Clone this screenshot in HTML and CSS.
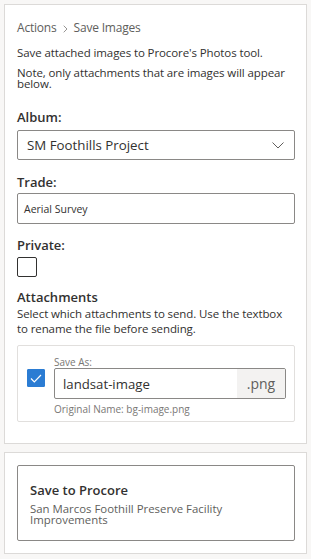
FILE: index.html
```html
<!DOCTYPE html>
<html>
<head>
<meta charset="utf-8">
<link rel="stylesheet" href="styles.css">
</head>
<body>
<div class="page">
  <section class="card main">
    <div class="crumbs">Actions<svg class="sep" width="5" height="8" viewBox="0 0 5 8"><path d="M0.7 0.7 L4 4 L0.7 7.3" fill="none" stroke="#8a8886" stroke-width="0.9"/></svg>Save Images</div>
    <p class="desc first">Save attached images to Procore's Photos tool.</p>
    <p class="desc tight">Note, only attachments that are images will appear below.</p>

    <div class="label album">Album:</div>
    <div class="select">
      <span>SM Foothills Project</span>
      <svg class="chev" width="12" height="7" viewBox="0 0 12 7"><path d="M0.5 0.5 L6 6 L11.5 0.5" fill="none" stroke="#605e5c" stroke-width="1"/></svg>
    </div>

    <div class="label trade">Trade:</div>
    <div class="textbox">Aerial Survey</div>

    <div class="label private">Private:</div>
    <div class="check"></div>

    <div class="label heading">Attachments</div>
    <p class="desc help">Select which attachments to send. Use the textbox to rename the file before sending.</p>

    <div class="attach">
      <div class="checked">
        <svg width="12" height="9" viewBox="0 0 12 9"><path d="M1 4.5 L4.3 7.8 L11 1" fill="none" stroke="#fff" stroke-width="1.2"/></svg>
      </div>
      <div class="attach-body">
        <div class="small">Save As:</div>
        <div class="group">
          <span class="name">landsat-image</span>
          <span class="ext">.png</span>
        </div>
        <div class="small orig">Original Name: bg-image.png</div>
      </div>
    </div>
  </section>

  <section class="card footer">
    <div class="button">
      <div class="btn-title">Save to Procore</div>
      <div class="btn-sub">San Marcos Foothill Preserve Facility Improvements</div>
    </div>
  </section>
</div>
</body>
</html>
```

FILE: styles.css
```css
html, body {
  margin: 0;
  padding: 0;
  background: #f8f7f6;
}
body {
  font-family: "Open Sans", "Noto Sans", "Liberation Sans", sans-serif;
  color: #323130;
}
.page {
  padding: 4px;
  display: flex;
  flex-direction: column;
  gap: 8px;
  width: 303px;
}
.card {
  box-sizing: border-box;
  background: #fff;
  border: 1px solid #dcdad8;
  padding: 13px 11px 0 12px;
}
.main {
  height: 440px;
}
.crumbs {
  display: flex;
  align-items: center;
  font-size: 12px;
  line-height: 20px;
  color: #605e5c;
  letter-spacing: -0.2px;
}
.sep {
  display: block;
  margin: 1px 6px 0 6px;
}
.desc {
  margin: 0;
  font-size: 11.5px;
  color: #323130;
  letter-spacing: -0.1px;
}
.desc.first {
  margin-top: 7px;
  line-height: 16px;
}
.desc.tight {
  margin-top: 6px;
  line-height: 11px;
}
.label {
  font-size: 13px;
  font-weight: 600;
  line-height: 20px;
  color: #323130;
}
.label.album {
  margin-top: 18px;
}
.label.trade {
  margin-top: 12px;
}
.label.private {
  margin-top: 11px;
}
.select {
  box-sizing: border-box;
  height: 30px;
  border: 1px solid #8a8886;
  border-radius: 2px;
  display: flex;
  align-items: center;
  justify-content: space-between;
  padding: 0 10px 0 9px;
  font-size: 13.3px;
  margin-top: 3px;
}
.chev {
  display: block;
}
.textbox {
  box-sizing: border-box;
  height: 31px;
  border: 1px solid #8a8886;
  border-radius: 2px;
  display: flex;
  align-items: center;
  padding: 0 6px;
  font-size: 10.5px;
  margin-top: 1px;
}
.check {
  width: 18px;
  height: 18px;
  border: 1px solid #323130;
  border-radius: 2px;
  margin-top: 2px;
}
.label.heading {
  margin-top: 10px;
}
.desc.help {
  line-height: 15px;
  margin-top: -1.5px;
  padding-right: 4px;
}
.attach {
  box-sizing: border-box;
  margin-top: 9.5px;
  border: 1px solid #e1dfdd;
  border-radius: 2px;
  display: flex;
  padding: 10px 8px 6px 9px;
  gap: 9px;
  height: 77px;
}
.checked {
  width: 18px;
  height: 18px;
  background: #2b7cd3;
  border: 1px solid #2b7cd3;
  border-radius: 1px;
  box-sizing: border-box;
  margin-top: 13px;
  display: flex;
  align-items: center;
  justify-content: center;
  flex: none;
}
.attach-body {
  flex: 1;
  display: flex;
  flex-direction: column;
}
.small {
  font-size: 10px;
  line-height: 12px;
  color: #797775;
}
.group {
  box-sizing: border-box;
  display: flex;
  height: 31px;
  border: 1px solid #8a8886;
  border-radius: 2px;
  overflow: hidden;
}
.name {
  flex: 1;
  display: flex;
  align-items: center;
  padding-left: 8px;
  font-size: 13.2px;
}
.ext {
  width: 48px;
  background: #f3f2f1;
  display: flex;
  align-items: center;
  justify-content: center;
  font-size: 14px;
  color: #605e5c;
}
.orig {
  margin-top: 4px;
}
.footer {
  padding: 12px 11px 12px 12px;
}
.button {
  box-sizing: border-box;
  height: 76px;
  border: 1px solid #8a8886;
  border-radius: 2px;
  padding: 0 12px;
  display: flex;
  flex-direction: column;
  justify-content: center;
}
.btn-title {
  font-size: 13px;
  font-weight: 600;
  line-height: 18px;
  color: #323130;
}
.btn-sub {
  font-size: 11.4px;
  line-height: 11px;
  color: #605e5c;
  margin-top: 4px;
  padding-right: 20px;
}
```
